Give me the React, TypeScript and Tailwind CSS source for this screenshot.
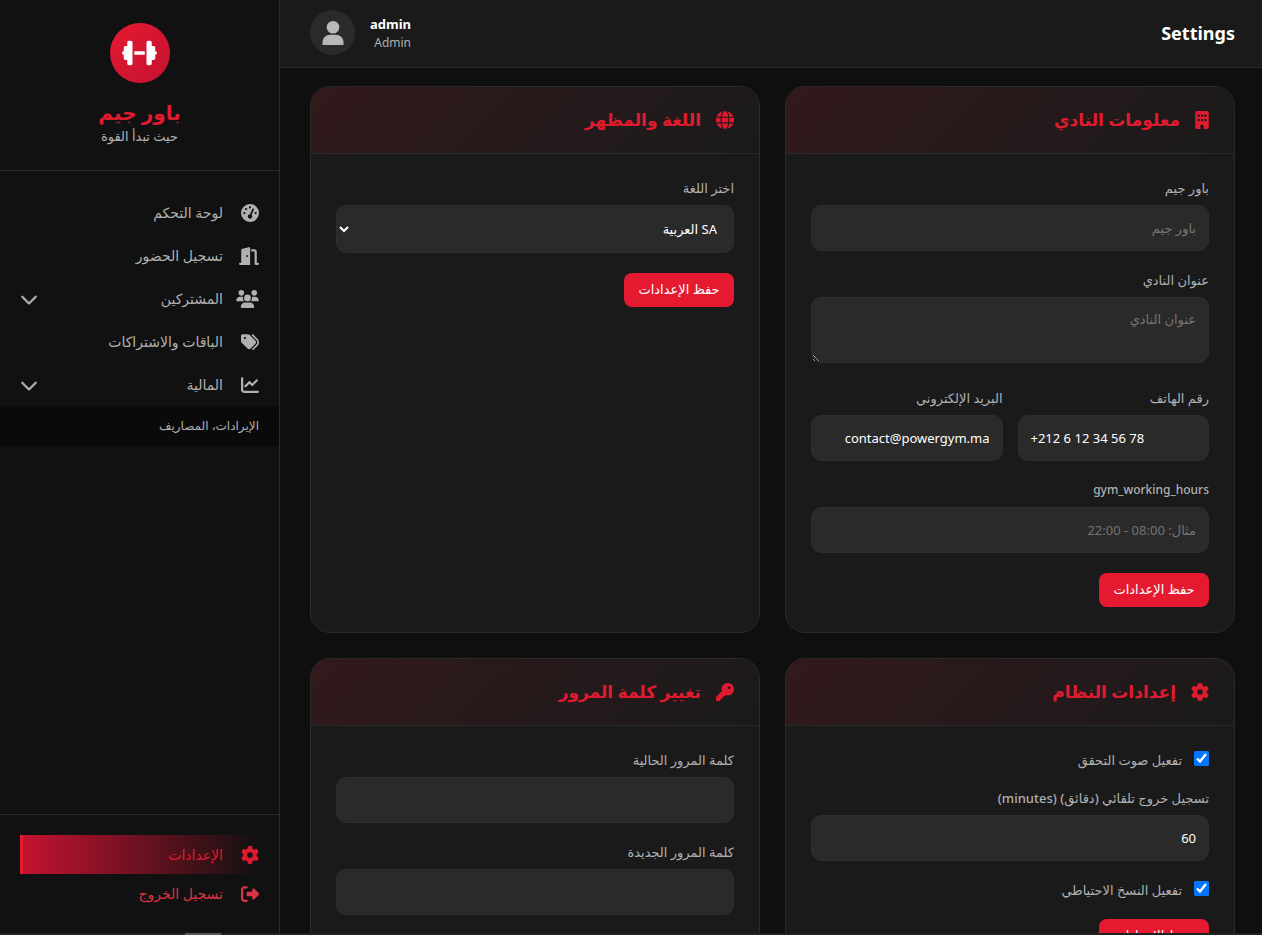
import React, { useState } from 'react';
import {
  FaBuilding,
  FaChartLine,
  FaChevronDown,
  FaDoorOpen,
  FaDumbbell,
  FaGaugeHigh,
  FaGear,
  FaGlobe,
  FaKey,
  FaRightFromBracket,
  FaTags,
  FaUsers,
} from 'react-icons/fa6';

const navItems = [
  { label: 'لوحة التحكم', icon: FaGaugeHigh, iconClass: 'size-[18px]' },
  { label: 'تسجيل الحضور', icon: FaDoorOpen, iconClass: 'h-[18px] w-5' },
  { label: 'المشتركين', icon: FaUsers, iconClass: 'h-[18px] w-[23px]', expandable: true },
  { label: 'الباقات والاشتراكات', icon: FaTags, iconClass: 'size-[18px]' },
  { label: 'المالية', icon: FaChartLine, iconClass: 'size-[18px]', expandable: true },
];

const fieldClass =
  'block w-full rounded-[10px] border border-[#2d2d2d] bg-[#2a2a2a] px-3 text-[13px] text-white placeholder:text-[#757575] outline-none focus:border-[#e5192f]';
const labelClass = 'mb-2 block leading-[18px] font-medium text-[#b0b0b0]';

// Card with a tinted header, shared by every settings section
const Card = ({ title, icon: Icon, iconClass = 'size-[18px]', children }) => (
  <section className="overflow-hidden rounded-[20px] border border-[#2a2a2a] bg-[#1a1a1a]">
    <div className="flex h-[67px] items-center gap-[15px] border-b border-[#2a2a2a] bg-[linear-gradient(135deg,#32191c,#1a1a1a)] px-[25px] text-[#e01b30]">
      <Icon className={iconClass} />
      <h2 className="text-[17px] font-bold">{title}</h2>
    </div>
    <div className="p-[25px]">{children}</div>
  </section>
);

const Field = ({ id, label, labelSize = 'text-[13px]', ...props }) => (
  <div className="mb-5 min-w-0 flex-1">
    <label htmlFor={id} className={`${labelClass} ${labelSize}`}>{label}</label>
    <input id={id} className={`${fieldClass} h-[46px]`} {...props} />
  </div>
);

const CheckField = ({ id, label }) => (
  <div className="mb-5 flex h-[18px] items-start gap-3">
    <input id={id} type="checkbox" defaultChecked className="size-[15px]" />
    <label htmlFor={id} className="text-[13px] leading-[18px] font-medium text-[#b0b0b0]">{label}</label>
  </div>
);

const SaveButton = () => (
  <button
    type="button"
    className="block h-[34px] w-[110px] rounded-lg bg-[#e5192f] text-[13px] font-medium text-white hover:bg-[#c41230]"
  >
    حفظ الإعدادات
  </button>
);

const Avatar = () => (
  <div className="flex size-[45px] items-center justify-center rounded-full bg-[#2a2a2a]">
    <svg viewBox="0 0 24 26" className="h-[26px] w-6 fill-[#b8b8b8]" aria-hidden="true">
      <circle cx="12" cy="7.2" r="6.3" />
      <path d="M1.5 25v-2.5c0-4.6 3.4-7.8 8-7.8h5c4.6 0 8 3.2 8 7.8V25z" />
    </svg>
  </div>
);

const Sidebar = () => (
  <aside className="flex w-[280px] shrink-0 flex-col border-r border-[#2a2a2a] bg-[#111111]">
    <div className="flex flex-col items-center border-b border-[#2a2a2a] pt-[23px] pb-[25px]">
      <div className="mb-4 flex size-[60px] items-center justify-center rounded-full bg-linear-to-br from-[#e5192f] to-[#c41230]">
        <FaDumbbell className="h-7 w-[35px] text-white" />
      </div>
      <h1 className="text-xl leading-7 font-bold text-[#e01b30]">باور جيم</h1>
      <p className="text-[13px] leading-[18px] text-[#b0b0b0]">حيث تبدأ القوة</p>
    </div>

    <nav className="flex-1 pt-5 text-[#b0b0b0]">
      {navItems.map(({ label, icon: Icon, iconClass, expandable }) => (
        <a key={label} href="#" className="flex h-[43px] items-center gap-3 px-5 hover:text-white">
          <span className="flex w-6 shrink-0">
            <Icon className={iconClass} />
          </span>
          <span className="flex-1 text-sm">{label}</span>
          {expandable && <FaChevronDown className="size-[18px]" />}
        </a>
      ))}
      <a href="#" className="flex h-10 items-center bg-[#0a0a0a] px-5 text-xs">
        الإيرادات، المصاريف
      </a>
    </nav>

    <div className="border-t border-[#2a2a2a] p-5">
      <a
        href="#"
        className="flex h-[39px] items-center gap-3 border-l-3 border-[#e5192f] bg-linear-to-l from-transparent to-[#c41230] text-[#e01b30]"
      >
        <span className="flex w-6 shrink-0"><FaGear className="size-[18px]" /></span>
        <span className="text-sm">الإعدادات</span>
      </a>
      <a href="#" className="flex h-[39px] items-center gap-3 text-[#dc3545]">
        <span className="flex w-6 shrink-0"><FaRightFromBracket className="size-[18px]" /></span>
        <span className="text-sm">تسجيل الخروج</span>
      </a>
    </div>
  </aside>
);

export default function App() {
  const [language, setLanguage] = useState('ar');

  return (
    <div
      dir="rtl"
      className="flex h-screen flex-col overflow-hidden bg-[#0f0f0f] font-['Noto_Sans','DejaVu_Sans',sans-serif] text-white"
    >
      <div className="flex min-h-0 flex-1">
        <main className="flex min-w-0 flex-1 flex-col">
          <header className="flex h-[68px] shrink-0 items-center justify-between border-b border-[#2a2a2a] bg-[#1a1a1a] pr-[27px] pb-[2px] pl-[30px]">
            <h1 className="text-lg font-bold">Settings</h1>
            <div className="flex items-center gap-[15px]">
              <div>
                <p className="text-[13px] leading-5 font-bold">admin</p>
                <p className="text-xs leading-[18px] text-[#b0b0b0]">Admin</p>
              </div>
              <Avatar />
            </div>
          </header>

          <div className="min-h-0 flex-1 overflow-hidden pt-[18px] pr-[27px] pl-[30px]">
            <div className="grid grid-cols-2 gap-[25px]">
              <Card title="معلومات النادي" icon={FaBuilding} iconClass="h-[18px] w-[14px]">
                <Field id="gym-name" label="باور جيم" placeholder="باور جيم" />
                <div className="mb-[26px]">
                  <label htmlFor="gym-address" className={`${labelClass} text-[13px]`}>عنوان النادي</label>
                  <textarea
                    id="gym-address"
                    placeholder="عنوان النادي"
                    className={`${fieldClass} h-[66px] resize-y py-3`}
                  />
                </div>
                <div className="flex gap-[15px]">
                  <Field id="gym-phone" label="رقم الهاتف" type="tel" dir="ltr" defaultValue="+212 6 12 34 56 78" />
                  <Field id="gym-email" label="البريد الإلكتروني" type="email" defaultValue="contact@powergym.ma" />
                </div>
                <Field id="gym-hours" label="gym_working_hours" labelSize="text-xs" placeholder="مثال: 08:00 - 22:00" />
                <SaveButton />
              </Card>

              <Card title="اللغة والمظهر" icon={FaGlobe}>
                <div className="mb-5">
                  <label htmlFor="language" className={`${labelClass} text-[13px]`}>اختر اللغة</label>
                  <select
                    id="language"
                    value={language}
                    onChange={(e) => setLanguage(e.target.value)}
                    className={`${fieldClass} h-12`}
                  >
                    <option value="ar">SA العربية</option>
                  </select>
                </div>
                <SaveButton />
              </Card>

              <Card title="إعدادات النظام" icon={FaGear}>
                <CheckField id="sound" label="تفعيل صوت التحقق" />
                <Field id="auto-checkout" label="تسجيل خروج تلقائي (دقائق) (minutes)" inputMode="numeric" defaultValue="60" />
                <CheckField id="backup" label="تفعيل النسخ الاحتياطي" />
                <SaveButton />
              </Card>

              <Card title="تغيير كلمة المرور" icon={FaKey}>
                <Field id="current-password" label="كلمة المرور الحالية" type="password" />
                <Field id="new-password" label="كلمة المرور الجديدة" type="password" />
              </Card>
            </div>
          </div>
        </main>
        <Sidebar />
      </div>

      <div className="h-[2px] shrink-0 bg-[#222222] pl-[185px]" dir="ltr">
        <div className="h-full w-9 bg-[#555555]" />
      </div>
    </div>
  );
}
